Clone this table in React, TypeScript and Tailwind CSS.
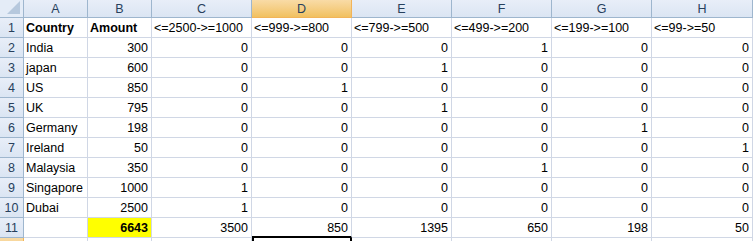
import React from "react";

const cols = ["A", "B", "C", "D", "E", "F", "G", "H"];

const headers = ["<=2500->=1000", "<=999->=800", "<=799->=500", "<=499->=200", "<=199->=100", "<=99->=50"];

const rows: [string, number, number[]][] = [
  ["India", 300, [0, 0, 0, 1, 0, 0]],
  ["japan", 600, [0, 0, 1, 0, 0, 0]],
  ["US", 850, [0, 1, 0, 0, 0, 0]],
  ["UK", 795, [0, 0, 1, 0, 0, 0]],
  ["Germany", 198, [0, 0, 0, 0, 1, 0]],
  ["Ireland", 50, [0, 0, 0, 0, 0, 1]],
  ["Malaysia", 350, [0, 0, 0, 1, 0, 0]],
  ["Singapore", 1000, [1, 0, 0, 0, 0, 0]],
  ["Dubai", 2500, [1, 0, 0, 0, 0, 0]],
];

const totals = [3500, 850, 1395, 650, 198, 50];

const cell = "border-r border-b border-[#d0d7e5] flex items-center pt-[2px] whitespace-nowrap overflow-visible";
const rowHead =
  "border-r border-b border-[#9eb6ce] bg-gradient-to-b from-[#e8eef8] to-[#dbe5f3] flex items-center justify-center pt-[1px] text-[#27405d]";

function Num({ v, bold, yellow }: { v: number | string; bold?: boolean; yellow?: boolean }) {
  return (
    <div className={`${cell} justify-end pr-[3px] ${bold ? "font-bold" : ""} ${yellow ? "bg-[#ffff00]" : ""}`}>{v}</div>
  );
}

export default function App() {
  return (
    <div
      className="h-[241px] w-[753px] overflow-hidden bg-white text-[12.5px] text-black"
      style={{ fontFamily: '"Liberation Sans", Arial, sans-serif' }}
    >
      <div className="grid grid-cols-[24px_64px_64px_100px_100px_100px_100px_100px_101px] grid-rows-[18px_repeat(11,20px)_20px]">
        {/* corner */}
        <div className="border-r border-b border-[#9eb6ce] bg-[#e4ecf7] flex items-end justify-end p-[3px]">
          <svg width="13" height="13" viewBox="0 0 13 13">
            <polygon points="13,0 13,13 0,13" fill="#b6c8dd" />
          </svg>
        </div>
        {cols.map((c) => (
          <div
            key={c}
            className={`border-r border-b flex items-center justify-center pt-[1px] ${
              c === "D"
                ? "border-[#f2b459] bg-gradient-to-b from-[#f9dba6] to-[#f1c15f] text-[#27405d]"
                : "border-[#9eb6ce] bg-gradient-to-b from-[#e8eef8] to-[#dbe5f3] text-[#27405d]"
            }`}
          >
            {c}
          </div>
        ))}

        {/* row 1 */}
        <div className={rowHead}>1</div>
        <div className={`${cell} pl-[2px] font-bold`}>Country</div>
        <div className={`${cell} pl-[2px] font-bold`}>Amount</div>
        {headers.map((h) => (
          <div key={h} className={`${cell} pl-[2px]`}>
            {h}
          </div>
        ))}

        {rows.map(([name, amt, vals], i) => (
          <React.Fragment key={name}>
            <div className={rowHead}>{i + 2}</div>
            <div className={`${cell} pl-[2px]`}>{name}</div>
            <Num v={amt} />
            {vals.map((v, j) => (
              <Num key={j} v={v} />
            ))}
          </React.Fragment>
        ))}

        {/* row 11 */}
        <div className={rowHead}>11</div>
        <div className={cell}></div>
        <Num v={6643} bold yellow />
        {totals.map((t, j) => (
          <div
            key={j}
            className={`border-r border-[#d0d7e5] flex items-center justify-end pr-[3px] pt-[2px] ${
              j === 1 ? "border-b-2 border-b-black" : "border-b"
            }`}
          >
            {t}
          </div>
        ))}

        {/* row 12 (partially visible) */}
        <div className="border-r border-[#f2b459] bg-gradient-to-b from-[#f9dba6] to-[#f1c15f]"></div>
        {cols.map((c) => (
          <div
            key={c}
            className={`border-r border-[#d0d7e5] ${c === "D" ? "border-l-2 border-l-black border-r-2 border-r-black" : ""}`}
          ></div>
        ))}
      </div>
    </div>
  );
}
